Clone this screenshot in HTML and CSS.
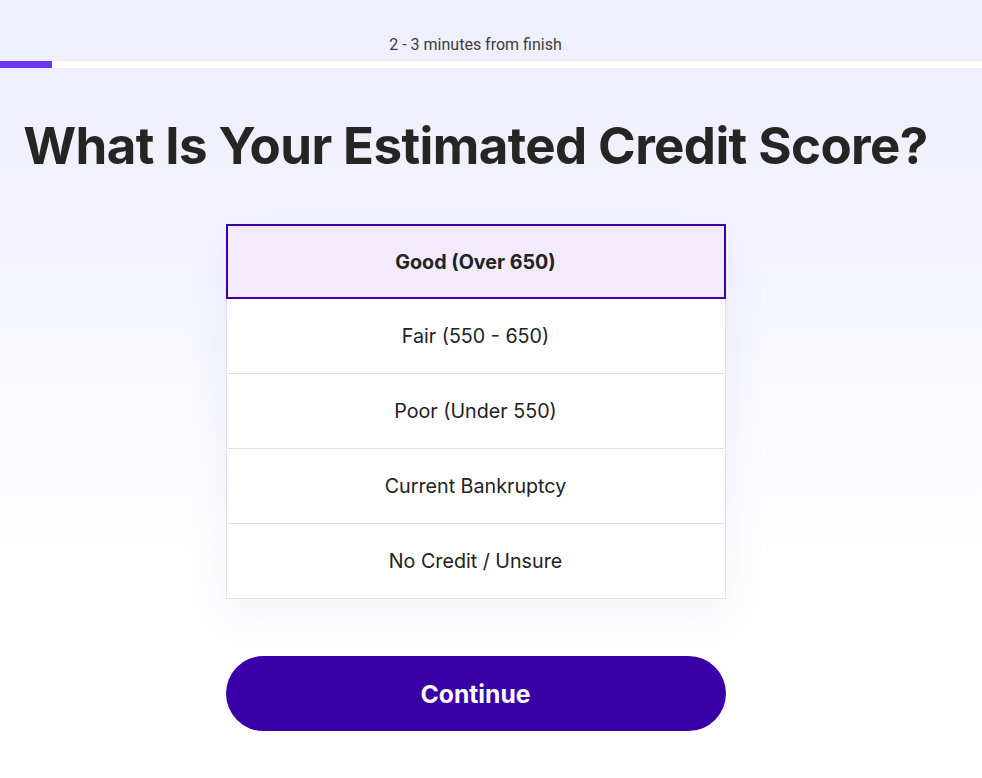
FILE: index.html
```html
<!DOCTYPE html>
<html lang="en">
<head>
<meta charset="utf-8">
<title>What Is Your Estimated Credit Score?</title>
<link rel="stylesheet" href="styles.css">
</head>
<body>
<div class="page">
  <header class="top">
    <div class="eta">2 - 3 minutes from finish</div>
    <div class="progress"><div class="progress-fill"></div></div>
  </header>
  <main class="content">
    <h1 class="title">What Is Your Estimated Credit Score?</h1>
    <div class="options">
      <div class="option selected">Good (Over 650)</div>
      <div class="option">Fair (550 - 650)</div>
      <div class="option">Poor (Under 550)</div>
      <div class="option">Current Bankruptcy</div>
      <div class="option">No Credit / Unsure</div>
    </div>
    <button class="continue" type="button">Continue</button>
  </main>
</div>
</body>
</html>
```

FILE: styles.css
```css
* { box-sizing: border-box; }
html, body { margin: 0; padding: 0; }
body {
  font-family: Inter, "Noto Sans", sans-serif;
  color: #252525;
  background: linear-gradient(180deg, #f0effd 0px, #f0effd 120px, #ffffff 560px) no-repeat;
  background-color: #fff;
  min-height: 778px;
}
.page { width: 100%; }
.top { padding-top: 35px; }
.eta {
  width: 951px;
  text-align: center;
  font-family: Roboto, sans-serif;
  font-size: 16px;
  line-height: 19px;
  color: #3d3d45;
}
.progress {
  margin-top: 7px;
  height: 7px;
  background: #ffffff;
  width: 100%;
}
.progress-fill {
  width: 52px;
  height: 100%;
  background: #6b36f0;
}
.content {
  width: 951px;
  display: flex;
  flex-direction: column;
  align-items: center;
}
.title {
  margin: 48px 0 0;
  font-size: 51px;
  line-height: 60px;
  font-weight: 700;
  letter-spacing: -0.6px;
  color: #252523;
  text-align: center;
  white-space: nowrap;
}
.options {
  margin-top: 48px;
  width: 500px;
  display: flex;
  flex-direction: column;
  background: #fff;
  box-shadow: 0 12px 40px rgba(70, 60, 170, 0.08);
}
.option {
  height: 75px;
  display: flex;
  align-items: center;
  justify-content: center;
  font-size: 19.7px;
  color: #222;
  background: #fff;
  border: 1px solid #e2e2e6;
  border-top: none;
}
.option.selected {
  border: 2px solid #3a00a8;
  background: #f3ebfd;
  font-weight: 700;
}
.continue {
  margin-top: 57px;
  width: 500px;
  height: 75px;
  border: none;
  border-radius: 38px;
  background: #3a00a8;
  color: #fff;
  font-family: Inter, sans-serif;
  font-size: 24.7px;
  font-weight: 700;
  cursor: pointer;
}
```
